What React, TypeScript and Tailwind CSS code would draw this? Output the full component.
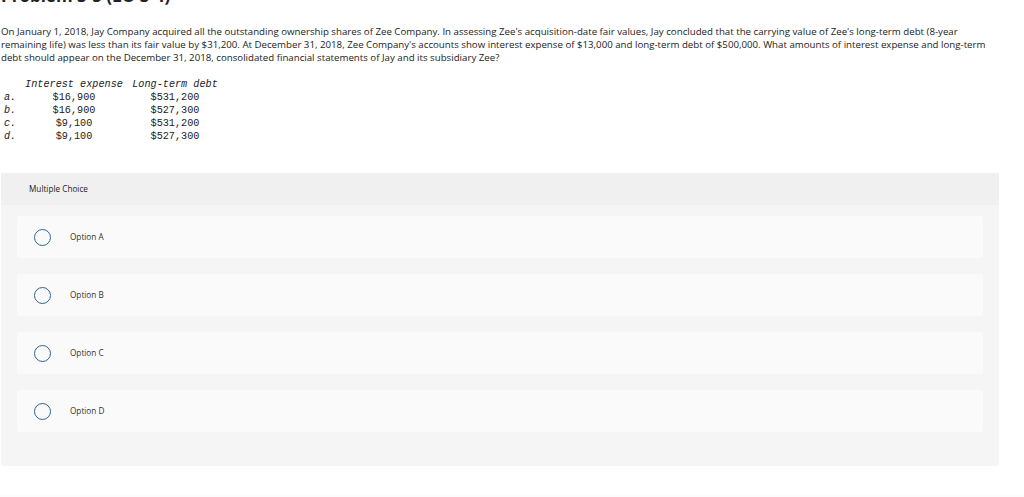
const rows = [
  { label: "a.", interest: "$16,900", debt: "$531,200" },
  { label: "b.", interest: "$16,900", debt: "$527,300" },
  { label: "c.", interest: "$9,100", debt: "$531,200" },
  { label: "d.", interest: "$9,100", debt: "$527,300" },
];

const options = ["Option A", "Option B", "Option C", "Option D"];

export default function App() {
  return (
    <main className="h-[497px] w-[1024px] overflow-hidden bg-white font-['Open_Sans',sans-serif] text-[#333]">
      {/* Title, scrolled mostly out of view */}
      <h2 className="-mt-[13px] pl-[1px] text-[17px] font-bold leading-[18px] text-[#222]">
        Problem 3-5 (LO 3-4)
      </h2>

      <p className="mt-[20px] whitespace-nowrap pl-[1px] text-[9.7px] leading-[13px] text-[#222]">
        On January 1, 2018, Jay Company acquired all the outstanding ownership shares of Zee Company. In assessing Zee's
        acquisition-date fair values, Jay concluded that the carrying value of Zee's long-term debt (8-year
        <br />
        remaining life) was less than its fair value by $31,200. At December 31, 2018, Zee Company's accounts show
        interest expense of $13,000 and long-term debt of $500,000. What amounts of interest expense and long-term
        <br />
        debt should appear on the December 31, 2018, consolidated financial statements of Jay and its subsidiary Zee?
      </p>

      {/* Answer table */}
      <div className="ml-[4px] mt-[14px] grid grid-cols-[20px_100px_102px] font-['Liberation_Mono',monospace] text-[10.2px] leading-[13px] text-[#222]">
        <span />
        <span className="text-center italic">Interest expense</span>
        <span className="text-center italic">Long-term debt</span>
        {rows.map((r) => (
          <div key={r.label} className="contents">
            <span className="italic">{r.label}</span>
            <span className="text-center">{r.interest}</span>
            <span className="text-center">{r.debt}</span>
          </div>
        ))}
      </div>

      {/* Multiple choice panel */}
      <section className="ml-[1px] mt-[30px] w-[998px] rounded-b-[2px] bg-[#f5f5f5]">
        <div className="flex h-[32px] items-center bg-[#f0f0f0] pl-[28px] text-[8.2px] text-[#222]">
          Multiple Choice
        </div>
        <div className="flex flex-col gap-[16px] px-[16px] pb-[34px] pt-[11px]">
          {options.map((o) => (
            <div key={o} className="flex h-[42px] items-center rounded-[2px] bg-[#fafafa]">
              <span className="ml-[17px] h-[17px] w-[17px] rounded-full border-[1.5px] border-[#2c6496]" />
              <span className="ml-[19px] text-[8.2px] text-[#333]">{o}</span>
            </div>
          ))}
        </div>
      </section>

      <div className="mt-[29px] h-[10px] bg-[#fcfcfc]" />
    </main>
  );
}
